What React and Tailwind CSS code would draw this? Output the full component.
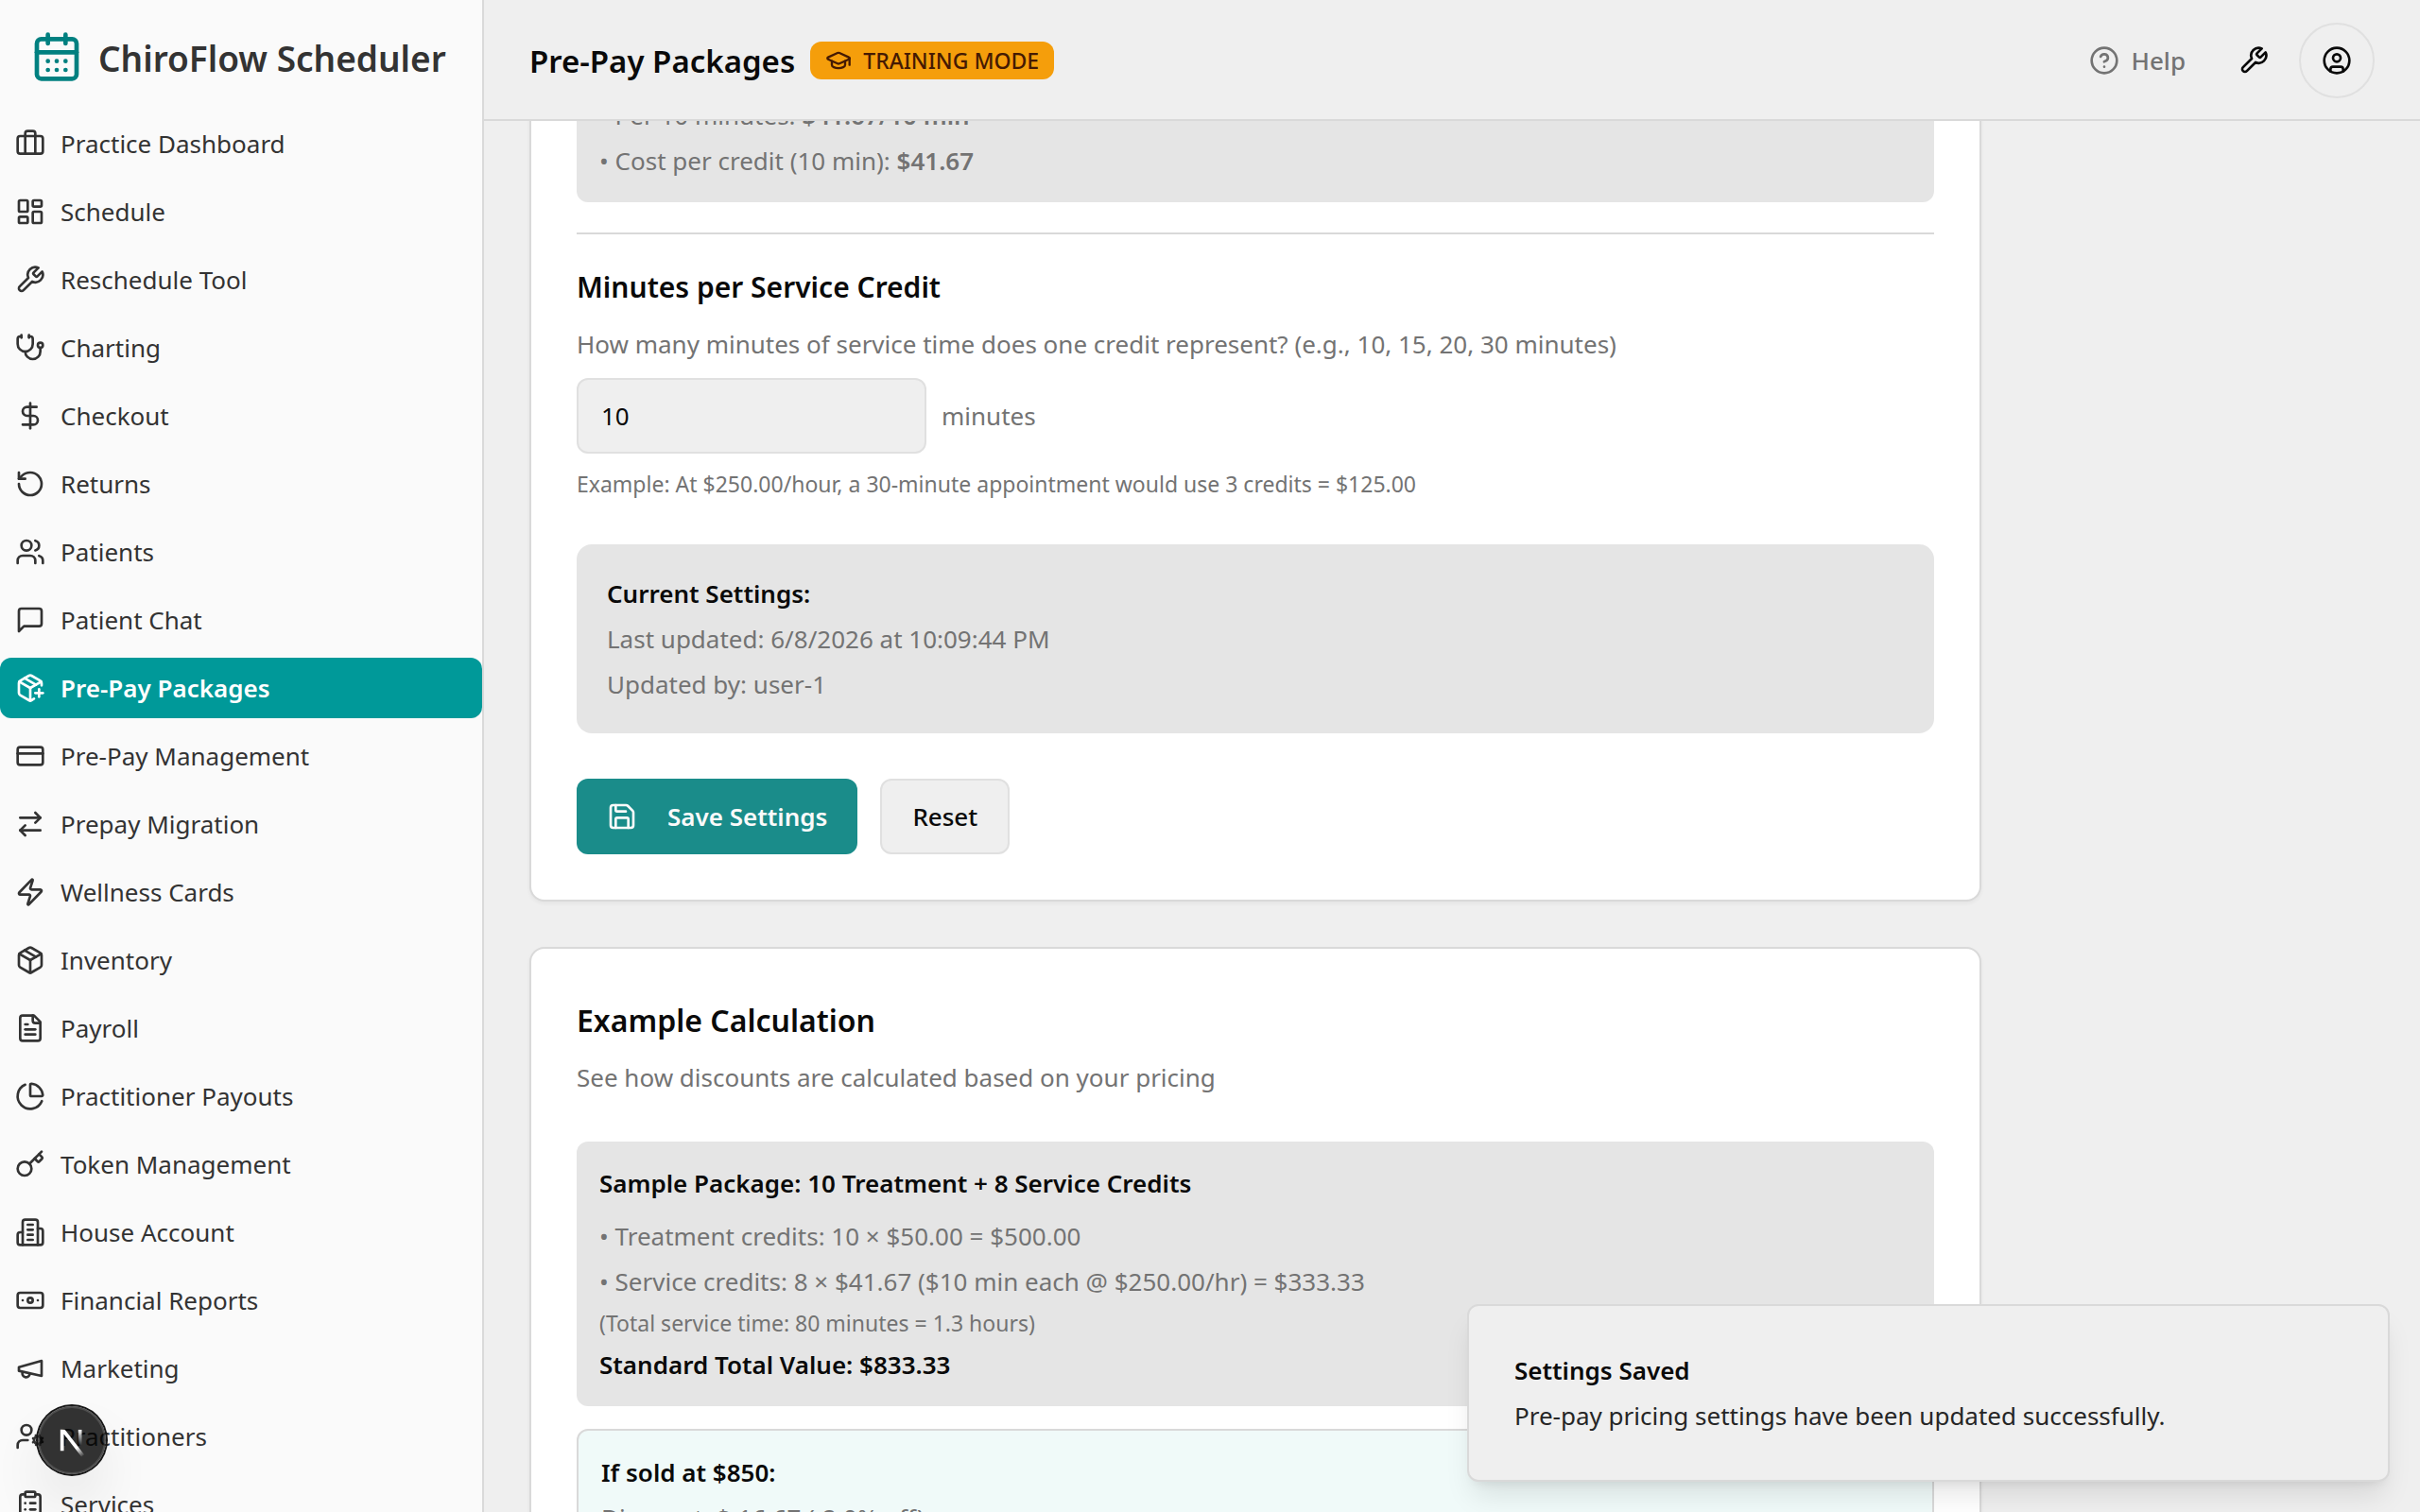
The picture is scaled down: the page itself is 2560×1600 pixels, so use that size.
import { useState } from 'react';

function Icon({ className = 'size-8', children }) {
  return (
    <svg
      viewBox="0 0 24 24"
      fill="none"
      stroke="currentColor"
      strokeWidth="2"
      strokeLinecap="round"
      strokeLinejoin="round"
      aria-hidden="true"
      className={`shrink-0 ${className}`}
    >
      {children}
    </svg>
  );
}

const paths = (...list) => list.map((d) => <path key={d} d={d} />);

const WRENCH =
  'M14.7 6.3a1 1 0 0 0 0 1.4l1.6 1.6a1 1 0 0 0 1.4 0l3.77-3.77a6 6 0 0 1-7.94 7.94l-6.91 6.91a2.12 2.12 0 0 1-3-3l6.91-6.91a6 6 0 0 1 7.94-7.94l-3.76 3.76z';
const BOX_TOP = ['m7.5 4.27 9 5.15', 'M12 22V12'];

const ICONS = {
  briefcase: (
    <>
      <path d="M16 20V4a2 2 0 0 0-2-2h-4a2 2 0 0 0-2 2v16" />
      <rect width="20" height="14" x="2" y="6" rx="2" />
    </>
  ),
  dashboard: (
    <>
      <rect width="7" height="9" x="3" y="3" rx="1" />
      <rect width="7" height="5" x="14" y="3" rx="1" />
      <rect width="7" height="9" x="14" y="12" rx="1" />
      <rect width="7" height="5" x="3" y="16" rx="1" />
    </>
  ),
  wrench: paths(WRENCH),
  stethoscope: (
    <>
      {paths(
        'M11 2v2',
        'M5 2v2',
        'M5 3H4a2 2 0 0 0-2 2v4a6 6 0 0 0 12 0V5a2 2 0 0 0-2-2h-1',
        'M8 15a6 6 0 0 0 12 0v-3'
      )}
      <circle cx="20" cy="10" r="2" />
    </>
  ),
  dollar: paths('M12 2v20', 'M17 5H9.5a3.5 3.5 0 0 0 0 7h5a3.5 3.5 0 0 1 0 7H6'),
  rotate: paths('M3 12a9 9 0 1 0 9-9 9.75 9.75 0 0 0-6.74 2.74L3 8', 'M3 3v5h5'),
  users: (
    <>
      {paths(
        'M16 21v-2a4 4 0 0 0-4-4H6a4 4 0 0 0-4 4v2',
        'M22 21v-2a4 4 0 0 0-3-3.87',
        'M16 3.13a4 4 0 0 1 0 7.75'
      )}
      <circle cx="9" cy="7" r="4" />
    </>
  ),
  message: paths('M21 15a2 2 0 0 1-2 2H7l-4 4V5a2 2 0 0 1 2-2h14a2 2 0 0 1 2 2z'),
  packagePlus: paths(
    'M16 16h6',
    'M19 13v6',
    'M21 10V8a2 2 0 0 0-1-1.73l-7-4a2 2 0 0 0-2 0l-7 4A2 2 0 0 0 3 8v8a2 2 0 0 0 1 1.73l7 4a2 2 0 0 0 2 0l2-1.14',
    'm7.5 4.27 9 5.15',
    'M3.29 7 12 12l8.71-5',
    'M12 22V12'
  ),
  card: (
    <>
      <rect width="20" height="14" x="2" y="5" rx="2" />
      <path d="M2 10h20" />
    </>
  ),
  arrows: paths('m16 3 4 4-4 4', 'M20 7H4', 'm8 21-4-4 4-4', 'M4 17h16'),
  zap: paths(
    'M4 14a1 1 0 0 1-.78-1.63l9.9-10.2a.5.5 0 0 1 .86.46l-1.92 6.02A1 1 0 0 0 13 10h7a1 1 0 0 1 .78 1.63l-9.9 10.2a.5.5 0 0 1-.86-.46l1.92-6.02A1 1 0 0 0 11 14z'
  ),
  package: paths(
    'M11 21.73a2 2 0 0 0 2 0l7-4A2 2 0 0 0 21 16V8a2 2 0 0 0-1-1.73l-7-4a2 2 0 0 0-2 0l-7 4A2 2 0 0 0 3 8v8a2 2 0 0 0 1 1.73z',
    'M3.29 7 12 12l8.71-5',
    ...BOX_TOP
  ),
  file: paths(
    'M15 2H6a2 2 0 0 0-2 2v16a2 2 0 0 0 2 2h12a2 2 0 0 0 2-2V7Z',
    'M14 2v4a2 2 0 0 0 2 2h4',
    'M10 9H8',
    'M16 13H8',
    'M16 17H8'
  ),
  pie: paths(
    'M21 12c.552 0 1.005-.449.95-.998a10 10 0 0 0-8.953-8.951c-.55-.055-.998.398-.998.95v8a1 1 0 0 0 1 1z',
    'M21.21 15.89A10 10 0 1 1 8 2.83'
  ),
  key: (
    <>
      {paths('m15.5 7.5 2.3 2.3a1 1 0 0 0 1.4 0l2.1-2.1a1 1 0 0 0 0-1.4L19 4', 'm21 2-9.6 9.6')}
      <circle cx="7.5" cy="15.5" r="5.5" />
    </>
  ),
  building: paths(
    'M6 22V4a2 2 0 0 1 2-2h8a2 2 0 0 1 2 2v18Z',
    'M6 12H4a2 2 0 0 0-2 2v6a2 2 0 0 0 2 2h2',
    'M18 9h2a2 2 0 0 1 2 2v9a2 2 0 0 1-2 2h-2',
    'M10 6h4',
    'M10 10h4',
    'M10 14h4',
    'M10 18h4'
  ),
  banknote: (
    <>
      <rect width="20" height="12" x="2" y="6" rx="2" />
      <circle cx="12" cy="12" r="2" />
      <path d="M6 12h.01M18 12h.01" />
    </>
  ),
  megaphone: paths('m3 11 18-5v12L3 14v-3z', 'M11.6 16.8a3 3 0 1 1-5.8-1.6'),
  userCog: (
    <>
      <circle cx="18" cy="15" r="3" />
      <circle cx="9" cy="7" r="4" />
      {paths(
        'M10 15H6a4 4 0 0 0-4 4v2',
        'm21.7 16.4-.9-.3',
        'm15.2 13.9-.9-.3',
        'm16.6 18.7.3-.9',
        'm19.1 12.2.3-.9',
        'm19.6 18.7-.4-1',
        'm16.8 12.3-.4-1',
        'm14.3 16.6 1-.4',
        'm20.7 13.8 1-.4'
      )}
    </>
  ),
  clipboard: (
    <>
      <rect width="8" height="4" x="8" y="2" rx="1" />
      {paths(
        'M16 4h2a2 2 0 0 1 2 2v14a2 2 0 0 1-2 2H6a2 2 0 0 1-2-2V6a2 2 0 0 1 2-2h2',
        'M12 11h4',
        'M12 16h4',
        'M8 11h.01',
        'M8 16h.01'
      )}
    </>
  ),
  calendar: (
    <>
      <rect width="18" height="18" x="3" y="4" rx="2" />
      {paths(
        'M8 2v4',
        'M16 2v4',
        'M3 10h18',
        'M8 14h.01',
        'M12 14h.01',
        'M16 14h.01',
        'M8 18h.01',
        'M12 18h.01',
        'M16 18h.01'
      )}
    </>
  ),
  cap: paths(
    'M21.42 10.922a1 1 0 0 0-.019-1.838L12.83 5.18a2 2 0 0 0-1.66 0L2.6 9.08a1 1 0 0 0 0 1.832l8.57 3.908a2 2 0 0 0 1.66 0z',
    'M22 10v6',
    'M6 12.5V16a6 3 0 0 0 12 0v-3.5'
  ),
  help: (
    <>
      <circle cx="12" cy="12" r="10" />
      {paths('M9.09 9a3 3 0 0 1 5.83 1c0 2-3 3-3 3', 'M12 17h.01')}
    </>
  ),
  account: (
    <>
      <circle cx="12" cy="12" r="10" />
      <circle cx="12" cy="10" r="3" />
      <path d="M7 20.662V19a2 2 0 0 1 2-2h6a2 2 0 0 1 2 2v1.662" />
    </>
  ),
  save: paths(
    'M15.2 3a2 2 0 0 1 1.4.6l3.8 3.8a2 2 0 0 1 .6 1.4V19a2 2 0 0 1-2 2H5a2 2 0 0 1-2-2V5a2 2 0 0 1 2-2z',
    'M17 21v-7a1 1 0 0 0-1-1H8a1 1 0 0 0-1 1v7',
    'M7 3v4a1 1 0 0 0 1 1h7'
  ),
};

const NAV = [
  ['Practice Dashboard', 'briefcase'],
  ['Schedule', 'dashboard'],
  ['Reschedule Tool', 'wrench'],
  ['Charting', 'stethoscope'],
  ['Checkout', 'dollar'],
  ['Returns', 'rotate'],
  ['Patients', 'users'],
  ['Patient Chat', 'message'],
  ['Pre-Pay Packages', 'packagePlus'],
  ['Pre-Pay Management', 'card'],
  ['Prepay Migration', 'arrows'],
  ['Wellness Cards', 'zap'],
  ['Inventory', 'package'],
  ['Payroll', 'file'],
  ['Practitioner Payouts', 'pie'],
  ['Token Management', 'key'],
  ['House Account', 'building'],
  ['Financial Reports', 'banknote'],
  ['Marketing', 'megaphone'],
  ['Practitioners', 'userCog'],
  ['Services', 'clipboard'],
];

function Sidebar() {
  return (
    <aside className="flex w-[512px] shrink-0 flex-col overflow-hidden border-r-2 border-[#d9d9d9] bg-[#fafafa] text-[#333333]">
      <div className="flex shrink-0 items-start gap-4 px-8 pt-8">
        <Icon className="size-14 text-[#008080]">{ICONS.calendar}</Icon>
        <span className="text-[37px] leading-15 font-semibold whitespace-nowrap">ChiroFlow Scheduler</span>
      </div>
      <nav className="mt-7 flex flex-col gap-2">
        {NAV.map(([label, icon]) => {
          const active = label === 'Pre-Pay Packages';
          return (
            <a
              key={label}
              href="#"
              aria-current={active ? 'page' : undefined}
              className={`flex h-16 shrink-0 items-center gap-4 rounded-xl px-4 ${
                active ? 'bg-[#009999] font-semibold text-white' : ''
              }`}
            >
              <Icon>{ICONS[icon]}</Icon>
              {label}
            </a>
          );
        })}
      </nav>
    </aside>
  );
}

function Header() {
  return (
    <header className="flex h-32 shrink-0 items-center justify-between border-b-2 border-[#d9d9d9] bg-[#efefef] px-12 pt-0.5">
      <div className="flex items-center gap-4">
        <h1 className="pt-0.5 text-[33px] leading-14 font-semibold">Pre-Pay Packages</h1>
        <span className="flex h-10 items-center gap-3 rounded-xl bg-[#f59e0b] px-4 text-[23px] leading-8 font-medium text-[#451a03]">
          <Icon className="size-7">{ICONS.cap}</Icon>
          TRAINING MODE
        </span>
      </div>
      <div className="flex items-center gap-4">
        <button type="button" className="flex h-16 items-center gap-3 px-6 font-medium text-[#737373]">
          <Icon>{ICONS.help}</Icon>
          Help
        </button>
        <button type="button" aria-label="Tools" className="flex size-16 items-center justify-center">
          <Icon>{ICONS.wrench}</Icon>
        </button>
        <button
          type="button"
          aria-label="Account"
          className="flex size-20 items-center justify-center rounded-full border-2 border-[#e0e0e0]"
        >
          <Icon>{ICONS.account}</Icon>
        </button>
      </div>
    </header>
  );
}

function Card({ children }) {
  return (
    <section className="max-w-[1536px] rounded-2xl border-2 border-[#d9d9d9] bg-white p-12 shadow-[0_2px_4px_rgba(0,0,0,0.05)]">
      {children}
    </section>
  );
}

function SettingsCard() {
  const [minutes, setMinutes] = useState('10');
  return (
    <Card>
      <div className="flex flex-col gap-2 rounded-xl bg-[#e5e5e5] p-6 text-[#737373]">
        <p>
          • Per 10 minutes: <strong className="font-semibold">$41.67/10 min</strong>
        </p>
        <p>
          • Cost per credit (10 min): <strong className="font-semibold">$41.67</strong>
        </p>
      </div>

      <div className="mt-8 flex flex-col gap-4 border-t-2 border-[#d9d9d9] pt-8">
        <h2 className="text-[30px] leading-12 font-semibold">
          <label htmlFor="minutes">Minutes per Service Credit</label>
        </h2>
        <p className="text-[#737373]">
          How many minutes of service time does one credit represent? (e.g., 10, 15, 20, 30 minutes)
        </p>
        <div className="flex items-center gap-4">
          <input
            id="minutes"
            type="text"
            inputMode="numeric"
            value={minutes}
            onChange={(e) => setMinutes(e.target.value)}
            className="h-20 w-[370px] rounded-xl border-2 border-[#e0e0e0] bg-[#efefef] px-6"
          />
          <span className="text-[#737373]">minutes</span>
        </div>
        <p className="text-[23px] leading-8 text-[#737373]">
          Example: At $250.00/hour, a 30-minute appointment would use 3 credits = $125.00
        </p>
      </div>

      <div className="mt-12 flex flex-col gap-2 rounded-2xl bg-[#e5e5e5] p-8">
        <p className="font-semibold">Current Settings:</p>
        <p className="text-[#737373]">Last updated: 6/8/2026 at 10:09:44 PM</p>
        <p className="text-[#737373]">Updated by: user-1</p>
      </div>

      <div className="mt-12 flex gap-6">
        <button
          type="button"
          className="flex h-20 items-center gap-8 rounded-xl bg-[#1a8c8a] px-8 font-semibold text-[#fafafa]"
        >
          <Icon>{ICONS.save}</Icon>
          Save Settings
        </button>
        <button type="button" className="h-20 rounded-xl border-2 border-[#e0e0e0] bg-[#efefef] px-8 font-medium">
          Reset
        </button>
      </div>
    </Card>
  );
}

function ExampleCard() {
  return (
    <Card>
      <h2 className="text-[32px] leading-14 font-semibold">Example Calculation</h2>
      <p className="mt-3 text-[#737373]">See how discounts are calculated based on your pricing</p>

      <div className="mt-12 rounded-xl bg-[#e5e5e5] p-6 text-[#737373]">
        <h3 className="font-semibold text-[#0a0a0a]">Sample Package: 10 Treatment + 8 Service Credits</h3>
        <div className="mt-4 flex flex-col gap-2">
          <p>• Treatment credits: 10 × $50.00 = $500.00</p>
          <p>• Service credits: 8 × $41.67 ($10 min each @ $250.00/hr) = $333.33</p>
          <p className="text-[23px] leading-8">(Total service time: 80 minutes = 1.3 hours)</p>
          <p className="font-semibold text-[#0a0a0a]">Standard Total Value: $833.33</p>
        </div>
      </div>

      <div className="mt-6 flex flex-col gap-2 rounded-xl border-2 border-[#d9d9d9] bg-[#f0faf9] p-6">
        <h3 className="font-semibold">If sold at $850:</h3>
        <p className="text-[#737373]">Discount: $-16.67 (-2.0% off)</p>
      </div>
    </Card>
  );
}

function Toast() {
  return (
    <div
      role="status"
      className="absolute right-8 bottom-8 flex w-[976px] flex-col gap-2 rounded-xl border-2 border-[#d9d9d9] bg-[#efefef] p-12 shadow-[0_20px_30px_-6px_rgba(0,0,0,0.1),0_8px_12px_-8px_rgba(0,0,0,0.1)]"
    >
      <p className="font-semibold">Settings Saved</p>
      <p className="text-[#262626]">Pre-pay pricing settings have been updated successfully.</p>
    </div>
  );
}

function DevBadge() {
  return (
    <button
      type="button"
      aria-label="Open developer tools"
      className="absolute bottom-10 left-10 flex size-[72px] items-center justify-center rounded-full bg-black/80 shadow-[0_0_0_2px_#171717,inset_0_0_0_2px_rgba(255,255,255,0.14),0_32px_64px_-16px_rgba(0,0,0,0.24)]"
    >
      <svg viewBox="0 0 40 40" fill="none" className="size-20 shrink-0" aria-hidden="true">
        <defs>
          <linearGradient id="diagonal" x1="9.955" y1="11.13" x2="15.7" y2="18.96" gradientUnits="userSpaceOnUse">
            <stop stopColor="white" />
            <stop offset="0.604" stopColor="white" stopOpacity="0" />
            <stop offset="1" stopColor="white" stopOpacity="0" />
          </linearGradient>
          <linearGradient id="stem" x1="11.82" y1="1.4" x2="11.79" y2="9.63" gradientUnits="userSpaceOnUse">
            <stop stopColor="white" />
            <stop offset="1" stopColor="white" stopOpacity="0" />
          </linearGradient>
          <clipPath id="mark">
            <rect x="0" y="1.4" width="16" height="16" />
          </clipPath>
        </defs>
        <g transform="translate(12.5 13)" strokeWidth="1.86" clipPath="url(#mark)">
          <path d="M13.3 15.2 2.34 1v11.6" stroke="url(#diagonal)" />
          <path d="M11.825 1.4v11.7" stroke="url(#stem)" />
        </g>
      </svg>
    </button>
  );
}

export default function App() {
  return (
    <div className="relative flex h-screen overflow-hidden bg-[#efefef] font-['Noto_Sans','Open_Sans',sans-serif] text-[26px] leading-10 text-[#0a0a0a]">
      <Sidebar />
      <div className="flex min-w-0 flex-1 flex-col">
        <Header />
        <main className="min-h-0 flex-1 overflow-hidden px-12">
          <div className="-mt-[100px] flex flex-col gap-12">
            <SettingsCard />
            <ExampleCard />
          </div>
        </main>
      </div>
      <Toast />
      <DevBadge />
    </div>
  );
}
